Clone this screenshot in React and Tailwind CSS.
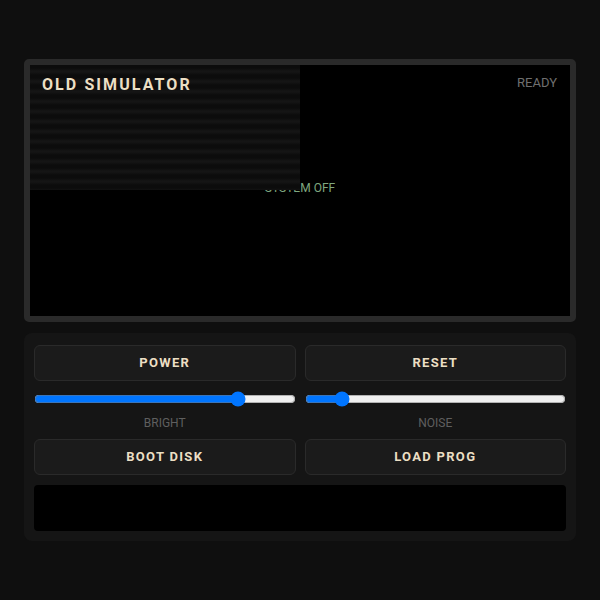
import React, {useState} from 'react';

const btn = "h-9 w-full rounded-md border border-[#2a2a2a] bg-[#1b1b1b] text-[13px] font-bold tracking-[0.1em] text-[#ecdfc4]";

export default function App() {
    const [bright, setBright] = useState(80);
    const [noise, setNoise] = useState(12);

    return (
        <div className="flex min-h-screen w-full items-center justify-center bg-[#0f0f0f] font-['Roboto',sans-serif]">
            <div className="flex w-[552px] flex-col gap-[11px]">

                {/* screen */}
                <div className="rounded-[5px] border-[6px] border-[#2a2a2a] bg-black">
                    <div className="relative flex h-[251px] items-center justify-center overflow-hidden bg-black pb-[5px]">
                        <span className="text-[12px] text-[#7fa77f]">SYSTEM OFF</span>
                        <div
                            className="absolute left-0 top-0 h-[125px] w-[270px] bg-[repeating-linear-gradient(to_bottom,#0c0c0c_0px,#0c0c0c_3px,#151515_6px,#151515_7px,#0c0c0c_10px)] blur-[0.5px]"/>
                        <div className="absolute left-3 top-[8px] text-[16px] font-bold tracking-[0.13em] text-[#ecdfc4]">
                            OLD SIMULATOR
                        </div>
                        <div className="absolute right-[13px] top-[8px] text-[13px] text-[#6f6f6f]">READY</div>
                    </div>
                </div>

                {/* controls */}
                <div className="rounded-lg bg-[#151515] px-[10px] pb-[10px] pt-3">
                    <div className="grid grid-cols-2 gap-x-[9px]">
                        <button className={btn}>POWER</button>
                        <button className={btn}>RESET</button>

                        <div className="mt-[10px] flex flex-col items-center">
                            <input type="range" min="0" max="100" value={bright}
                                   onChange={(e) => setBright(e.target.value)}
                                   className="w-full"/>
                            <span className="mt-[7px] text-[12px] text-[#5f5f5f]">BRIGHT</span>
                        </div>
                        <div className="mt-[10px] flex flex-col items-center">
                            <input type="range" min="0" max="100" value={noise}
                                   onChange={(e) => setNoise(e.target.value)}
                                   className="w-full"/>
                            <span className="mt-[7px] text-[12px] text-[#5f5f5f]">NOISE</span>
                        </div>

                        <button className={btn + " mt-[7px]"}>BOOT DISK</button>
                        <button className={btn + " mt-[7px]"}>LOAD PROG</button>
                    </div>
                    <div className="mt-[10px] h-[46px] rounded bg-black"/>
                </div>
            </div>
        </div>
    );
}
